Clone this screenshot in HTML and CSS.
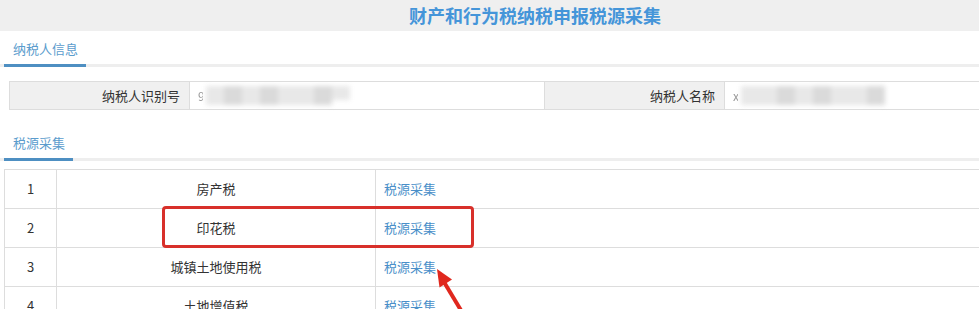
FILE: index.html
```html
<!DOCTYPE html>
<html lang="zh-CN">
<head>
<meta charset="utf-8">
<title>财产和行为税纳税申报税源采集</title>
<link rel="stylesheet" href="styles.css">
</head>
<body>
<div class="page">
  <div class="header">财产和行为税纳税申报税源采集</div>

  <div class="section-head"><span class="tab">纳税人信息</span></div>
  <div class="info">
    <div class="label">纳税人识别号</div>
    <div class="value"><span class="lead">9</span><span class="mask mask-a"><i></i><i class="d"></i><i></i><i class="d"></i><i></i><i></i><i class="d"></i><i></i></span></div>
    <div class="label">纳税人名称</div>
    <div class="value"><span class="lead">x</span><span class="mask mask-b"><i></i><i></i><i class="d"></i><i></i><i class="d"></i><i></i><i></i><i class="d"></i></span></div>
  </div>

  <div class="section-head second"><span class="tab">税源采集</span></div>
  <div class="data">
    <div class="row"><div class="num">1</div><div class="name">房产税</div><div class="op"><a class="link">税源采集</a></div></div>
    <div class="row"><div class="num">2</div><div class="name">印花税</div><div class="op"><a class="link">税源采集</a></div></div>
    <div class="row"><div class="num">3</div><div class="name">城镇土地使用税</div><div class="op"><a class="link">税源采集</a></div></div>
    <div class="row"><div class="num">4</div><div class="name">土地增值税</div><div class="op"><a class="link">税源采集</a></div></div>
    <div class="highlight"></div>
    <svg class="arrow" width="50" height="56" viewBox="0 0 50 56">
      <line x1="17" y1="19" x2="38" y2="54" stroke="#e0281e" stroke-width="4"/>
      <polygon points="10,6 25,16.5 12.5,24.5" fill="#e0281e"/>
    </svg>
  </div>
</div>
</body>
</html>
```

FILE: styles.css
```css
html, body {
  margin: 0;
  padding: 0;
  background: #ffffff;
  overflow: hidden;
}

body {
  font-family: "Noto Sans CJK SC", "Noto Sans", sans-serif;
  font-size: 13px;
  color: #333333;
}

.page {
  width: 1070px;
  position: relative;
}

.header {
  height: 31px;
  line-height: 31px;
  background: #efefef;
  text-align: center;
  font-size: 18px;
  font-weight: bold;
  color: #4595d9;
}

.section-head {
  display: flex;
  border-bottom: 3px solid #eeeeee;
}

.section-head.second {
  margin-top: 15px;
}

.tab {
  padding: 9px 8px 6px 9px;
  margin-left: 4px;
  line-height: 18px;
  color: #5b9ccd;
  border-bottom: 3px solid #4e8fc2;
  margin-bottom: -3px;
}

.info {
  margin: 14px 9px 0;
  display: grid;
  grid-template-columns: 179px 355px 180px 1fr;
  border: 1px solid #dddddd;
  height: 29px;
  box-sizing: border-box;
}

.label {
  background: #f0f0f0;
  text-align: right;
  padding-right: 9px;
  line-height: 27px;
}

.info > div + div {
  border-left: 1px solid #dddddd;
}

.value {
  display: flex;
  align-items: center;
  padding-left: 8px;
  line-height: 27px;
}

.lead {
  color: #999999;
  font-size: 12px;
  width: 5px;
  overflow: hidden;
  filter: blur(0.4px);
}

.mask {
  display: flex;
  height: 19px;
  filter: blur(2.5px);
  margin-left: 3px;
}

.mask i {
  display: block;
  width: 18px;
  height: 100%;
  background: #e8e8e8;
}

.mask i.d {
  background: #dadada;
}

.mask-a i:last-child {
  height: 14px;
}

.data {
  margin: 8px 0 0 4px;
  border-left: 1px solid #dddddd;
  border-top: 1px solid #dddddd;
  position: relative;
}

.row {
  display: grid;
  grid-template-columns: 52px 319px 1fr;
  height: 39px;
  box-sizing: border-box;
  border-bottom: 1px solid #dddddd;
  line-height: 38px;
}

.num {
  text-align: center;
  border-right: 1px solid #dddddd;
}

.name {
  text-align: center;
  border-right: 1px solid #dddddd;
}

.op {
  padding-left: 8px;
}

.link {
  color: #4a8fc9;
  text-decoration: none;
}

.highlight {
  position: absolute;
  left: 157px;
  top: 36px;
  width: 312px;
  height: 42px;
  box-sizing: border-box;
  border: 3px solid #d8302a;
  border-radius: 4px;
}

.arrow {
  position: absolute;
  left: 422px;
  top: 93px;
}
```
